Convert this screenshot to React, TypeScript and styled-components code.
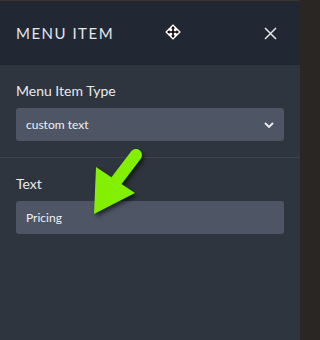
import React from 'react'
import styled, { createGlobalStyle } from 'styled-components'

const GlobalStyle = createGlobalStyle`
  html, body {
    margin: 0;
    padding: 0;
    background: #2a2624;
  }
  body {
    font-family: 'Lato', 'Liberation Sans', sans-serif;
  }
`

const Page = styled.div`
  position: relative;
  width: 303px;
  height: 340px;
  overflow: hidden;
  background: #2a2624;
`

const Panel = styled.div`
  display: flex;
  flex-direction: column;
  width: 300px;
  height: 340px;
  background: #2f353e;
`

const Header = styled.div`
  display: flex;
  align-items: center;
  justify-content: space-between;
  height: 64px;
  padding: 0 16px;
  background: #222833;
  border-top: 1px solid #3a312d;
`

const Title = styled.h2`
  margin: 0;
  font-size: 15px;
  font-weight: 400;
  letter-spacing: 1.5px;
  color: #e4e6ea;
`

const CloseButton = styled.button`
  display: flex;
  align-items: center;
  justify-content: center;
  width: 20px;
  height: 20px;
  margin-right: 4px;
  padding: 0;
  border: none;
  background: none;
  color: #e4e6ea;
  cursor: pointer;
`

const Section = styled.div<{ $divider?: boolean }>`
  display: flex;
  flex-direction: column;
  gap: 9px;
  padding: 17px 16px 16px;
  border-bottom: ${(p) => (p.$divider ? '1px solid #3c424c' : 'none')};
`

const Label = styled.label`
  font-size: 14px;
  line-height: 17px;
  color: #e8eaed;
`

const Field = styled.div`
  display: flex;
  align-items: center;
  justify-content: space-between;
  height: 33px;
  padding: 0 10px 0 10px;
  border-radius: 3px;
  background: #4e5665;
  font-size: 12px;
  color: #eef0f3;
`

const MoveCursor = styled.svg`
  position: absolute;
  left: 164px;
  top: 23px;
`

const Pointer = styled.svg`
  position: absolute;
  left: 86px;
  top: 144px;
  filter: drop-shadow(2px 3px 2px rgba(0, 0, 0, 0.55));
`

const App: React.FC = () => {
  return (
    <Page>
      <GlobalStyle />
      <Panel>
        <Header>
          <Title>MENU ITEM</Title>
          <CloseButton aria-label='close'>
            <svg width='13' height='13' viewBox='0 0 13 13'>
              <path d='M1 1L12 12M12 1L1 12' stroke='currentColor' strokeWidth='1.5' />
            </svg>
          </CloseButton>
        </Header>
        <Section $divider>
          <Label>Menu Item Type</Label>
          <Field>
            custom text
            <svg width='10' height='6' viewBox='0 0 10 6'>
              <path d='M1 1L5 5L9 1' stroke='#eef0f3' strokeWidth='1.8' fill='none' />
            </svg>
          </Field>
        </Section>
        <Section>
          <Label>Text</Label>
          <Field>Pricing</Field>
        </Section>
      </Panel>
      <MoveCursor width='18' height='18' viewBox='0 0 18 18'>
        <path d='M9 0.5L17.5 9L9 17.5L0.5 9Z' fill='#fff' stroke='#000' strokeWidth='1' />
        <path
          d='M9 3L11 5.5H9.8V8.2H12.5V7L15 9L12.5 11V9.8H9.8V12.5H11L9 15L7 12.5H8.2V9.8H5.5V11L3 9L5.5 7V8.2H8.2V5.5H7Z'
          fill='#000'
        />
      </MoveCursor>
      <Pointer width='60' height='74' viewBox='0 0 60 74'>
        <path d='M50 11L31 36' stroke='#82f000' strokeWidth='12' strokeLinecap='round' />
        <path d='M10 23L49 49L8 70Z' fill='#82f000' />
      </Pointer>
    </Page>
  )
}

export default App
